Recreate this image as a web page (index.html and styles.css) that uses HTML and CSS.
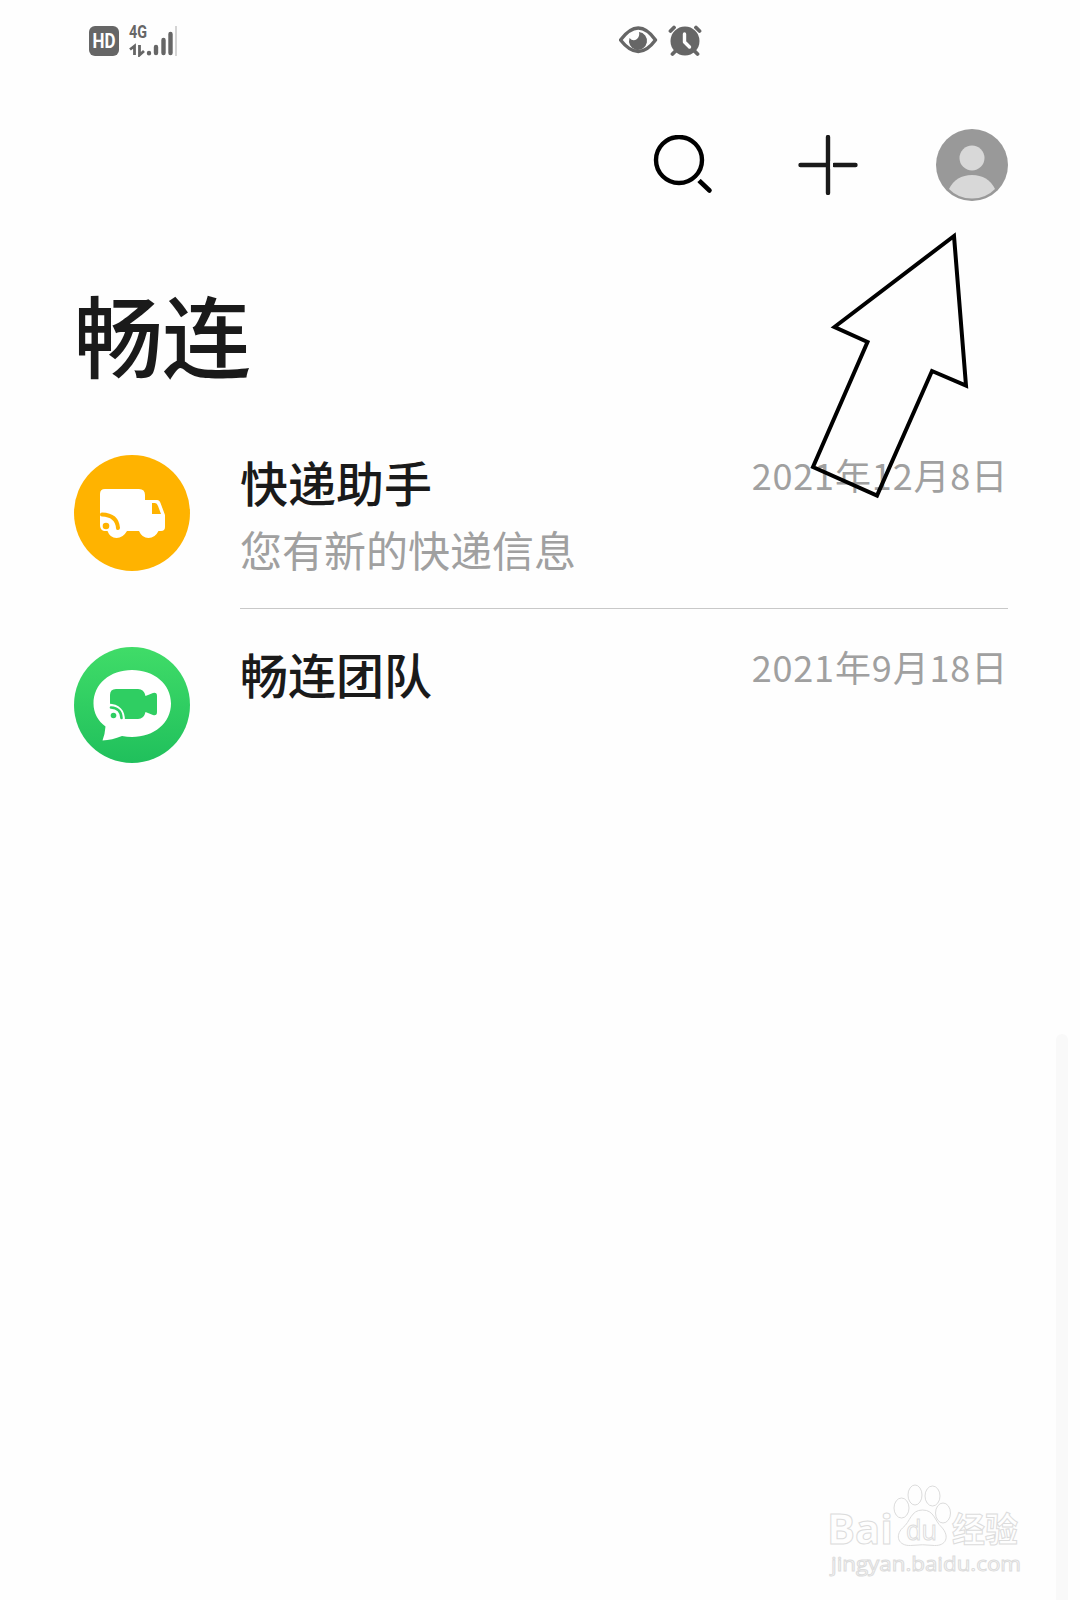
FILE: index.html
```html
<!DOCTYPE html>
<html lang="zh-CN">
<head>
  <meta charset="UTF-8" />
  <meta name="viewport" content="width=device-width, initial-scale=1.0"/>
  <title>畅连</title>
  <link rel="stylesheet" href="styles.css">
</head>
<body>

  <div class="screen">
    <header class="status-bar">
      <svg class="status-left" viewBox="0 -5 90 37" width="90" height="37">
        <rect x="0" y="1" width="30" height="30" rx="6" fill="#666"/>
        <text class="hd" x="3.5" y="23" textLength="23" lengthAdjust="spacingAndGlyphs">HD</text>
        <text class="net" x="40" y="13" textLength="18" lengthAdjust="spacingAndGlyphs">4G</text>
        <path d="M45.500 30V21L41 24.500M50.500 20V30L55 26" fill="none" stroke="#666" stroke-width="2.8"/>
        <g stroke="#666" stroke-width="4.4" stroke-linecap="round">
          <path d="M60 28v.2M67 22v6M74.5 15v13M81.5 9v19"/>
        </g>
        <path d="M87 1v30" stroke="#aaa"/>
      </svg>
      <svg class="status-mid" viewBox="0 0 84 32" width="84" height="32">
        <path d="M1.5 15Q19.500-9 36.500 15Q19.500 38 1.500 15Z" fill="none" stroke="#666" stroke-width="3.4" stroke-linejoin="round"/>
        <path d="M20 7A9 9 0 1 1 10.500 13Q14 17 18 14Q21 11 20 7Z" fill="#666"/>
        <circle cx="66" cy="16" r="14.500" fill="#666"/>
        <path d="M51.500 6L55 2.500M80.500 6L77 2.500M57 25.500L53.500 29M75 25.500L78.500 29" stroke="#666" stroke-width="3.800" stroke-linecap="round"/>
        <path d="M65.500 9V17L70.500 22" fill="none" stroke="#fefefe" stroke-width="3.400" stroke-linecap="round" stroke-linejoin="round"/>
      </svg>
    </header>

    <nav class="toolbar">
      <svg viewBox="0 0 60 60" width="60" height="60">
        <circle cx="26" cy="25" r="23" fill="none" stroke="#000" stroke-width="4.400"/>
        <path d="M46.500 46L56.500 55.500" stroke="#000" stroke-width="4.600" stroke-linecap="round"/>
        <path d="M43.500 46L48.500 41" stroke="#fefefe" stroke-width="3"/>
      </svg>
      <svg viewBox="0 0 60 60" width="60" height="60">
        <path d="M30 2V58M2.500 30H30M57.500 30H36" stroke="#1a1a1a" stroke-width="4.400" stroke-linecap="round"/>
        <path d="M33.700 26V34" stroke="#fefefe" stroke-width="2.600"/>
      </svg>
      <svg viewBox="0 0 72 72" width="72" height="72">
        <circle cx="36" cy="36" r="36" fill="#999"/>
        <circle cx="36" cy="29" r="12.500" fill="#d8d8d8"/>
        <path d="M13 60Q20 46 36 46T59 60Q50 69.500 36 69.500T13 60Z" fill="#d8d8d8"/>
      </svg>
    </nav>

    <h1>畅连</h1>

    <main class="chat-list">
      <section class="chat">
        <svg class="avatar" viewBox="0 0 116 116" width="116" height="116">
          <circle cx="58" cy="58" r="58" fill="#ffb300"/>
          <path d="M31 34H65Q71 34 71 40V45H83Q85.500 45 86.500 48L91 60V72Q91 76 87 76H84.500Q81 83 74.500 83T65 76H53Q49 83 42.500 83T33.500 76H30Q26 75 26 70V39Q26 34 31 34Z" fill="#fff"/>
          <path d="M78 48H81Q83 48 84 51L87 59H78Z" fill="#ffb300"/>
          <circle cx="32" cy="71" r="3.300" fill="#ffb300"/>
          <path d="M28 59.500Q43 60 44 73" fill="none" stroke="#ffb300" stroke-width="4" stroke-linecap="round"/>
        </svg>
        <div class="chat-body divided">
          <div class="chat-text">
            <h2>快递助手</h2>
            <p>您有新的快递信息</p>
          </div>
          <time>2021年12月8日</time>
        </div>
      </section>

      <section class="chat">
        <svg class="avatar" viewBox="0 0 116 116" width="116" height="116">
          <defs>
            <linearGradient id="green" x1="0" y1="0" x2="0" y2="1">
              <stop offset="0" stop-color="#40dc68"/>
              <stop offset="1" stop-color="#20c05c"/>
            </linearGradient>
          </defs>
          <circle cx="58" cy="58" r="58" fill="url(#green)"/>
          <path d="M58 23C80 23 97 37 97 56.500S80 90 58 90Q53 90 48 89Q38 93 28.500 93.500Q31 87 31.500 79.500C24 74 19.500 66 19.500 56.500C19.500 37 36 23 58 23Z" fill="#fff"/>
          <path d="M42 42H64Q70 42 71.500 49L79 46Q83 45 83 49V65Q83 69 79 68L71.500 65Q70 72 64 72H36V48Q36 42 42 42Z" fill="#2fce62"/>
          <path d="M34 56.500Q51 57 51 74H34Z" fill="#fff"/>
          <circle cx="39.500" cy="68.500" r="2.800" fill="#2fce62"/>
          <path d="M37 60.500Q47 61 47.500 71" fill="none" stroke="#2fce62" stroke-width="2.600" stroke-linecap="round"/>
        </svg>
        <div class="chat-body">
          <div class="chat-text">
            <h2>畅连团队</h2>
          </div>
          <time>2021年9月18日</time>
        </div>
      </section>
    </main>

    <!-- pointer to the profile button -->
    <svg class="arrow" viewBox="0 0 170 280" width="170" height="280">
      <path d="M154 16L34.500 107L67.500 122L13 247L77 275.500L132 151L166 165.500Z" fill="none" stroke="#000" stroke-width="4"/>
    </svg>

    <div class="scrollbar"></div>

    <svg class="watermark" viewBox="0 0 210 100" width="210" height="100">
      <g fill="#fefefe" stroke="#dcdcdc" stroke-width="1">
        <text class="brand" x="5" y="64" textLength="66" lengthAdjust="spacingAndGlyphs">Bai</text>
        <ellipse cx="79.500" cy="28" rx="7.500" ry="10"/>
        <ellipse cx="93" cy="15" rx="7" ry="10"/>
        <ellipse cx="110.500" cy="16" rx="7.500" ry="10"/>
        <ellipse cx="121" cy="33" rx="7.500" ry="10"/>
        <path d="M100.500 30C112.500 30 112.500 41 119.500 47C128.500 57 123.500 66 112.500 65.500Q100.500 64 88.500 65.500C76.500 66 72.500 56 80.500 48C88.500 42 88.500 30 100.500 30Z"/>
        <text class="du" x="84" y="60" textLength="31" lengthAdjust="spacingAndGlyphs">du</text>
        <text class="brand-cn" x="130" y="62" textLength="66" lengthAdjust="spacingAndGlyphs">经验</text>
        <text class="site" x="9" y="91" textLength="190" lengthAdjust="spacingAndGlyphs">jingyan.baidu.com</text>
      </g>
    </svg>
  </div>

</body>
</html>
```
FILE: styles.css
```css
* {
  box-sizing: border-box;
}
body {
  margin: 0;
  background: #fefefe;
  font-family: "Noto Sans CJK SC", "Noto Sans", sans-serif;
  color: #1a1a1a;
}
.screen {
  position: relative;
  width: 1080px;
  height: 1600px;
  padding: 25px 72px 0 74px;
  overflow: hidden;
}
svg {
  display: block;
  flex: none;
}
.status-bar {
  display: flex;
  justify-content: space-between;
  height: 104px;
  padding: 0 305px 0 15px;
}
.status-left {
  margin-top: -5px;
}
.hd {
  font: bold 20px Roboto, sans-serif;
  fill: #fff;
}
.net {
  font: bold 18px Roboto, sans-serif;
  fill: #666;
}
.toolbar {
  display: flex;
  justify-content: flex-end;
  align-items: center;
  height: 72px;
  gap: 85px;
}
.toolbar svg:last-child {
  margin-left: -7px;
}
h1 {
  margin: 67px 0 0;
  font-size: 89px;
  font-weight: 500;
  line-height: 130px;
  letter-spacing: -1px;
}
.chat-list {
  padding-top: 57px;
}
.chat {
  display: flex;
  gap: 50px;
  height: 192px;
}
.chat-body {
  display: flex;
  flex: 1;
  justify-content: space-between;
  height: 154px;
}
.divided {
  border-bottom: 1px solid #c8c8c8;
}
h2 {
  margin: 0;
  font-size: 48px;
  font-weight: 500;
  line-height: 52px;
}
.chat-text p {
  margin: 12px 0 0;
  font-size: 42px;
  font-weight: 400;
  line-height: 60px;
  color: #a0a0a0;
}
time {
  font-size: 36px;
  font-weight: 400;
  line-height: 38px;
  letter-spacing: 0.85px;
  color: #a0a0a0;
}
.arrow {
  position: absolute;
  left: 800px;
  top: 220px;
}
.scrollbar {
  position: absolute;
  left: 1056px;
  top: 1034px;
  width: 12px;
  height: 580px;
  border-radius: 6px;
  background: #f9f9f9;
}
.watermark {
  position: absolute;
  left: 822px;
  top: 1480px;
}
.brand {
  font: bold 42px "Open Sans", sans-serif;
}
.du {
  font: 27px "Open Sans", sans-serif;
}
.brand-cn {
  font: bold 34px "Noto Sans CJK SC", sans-serif;
}
.site {
  font: 20px "Open Sans", sans-serif;
}
```
